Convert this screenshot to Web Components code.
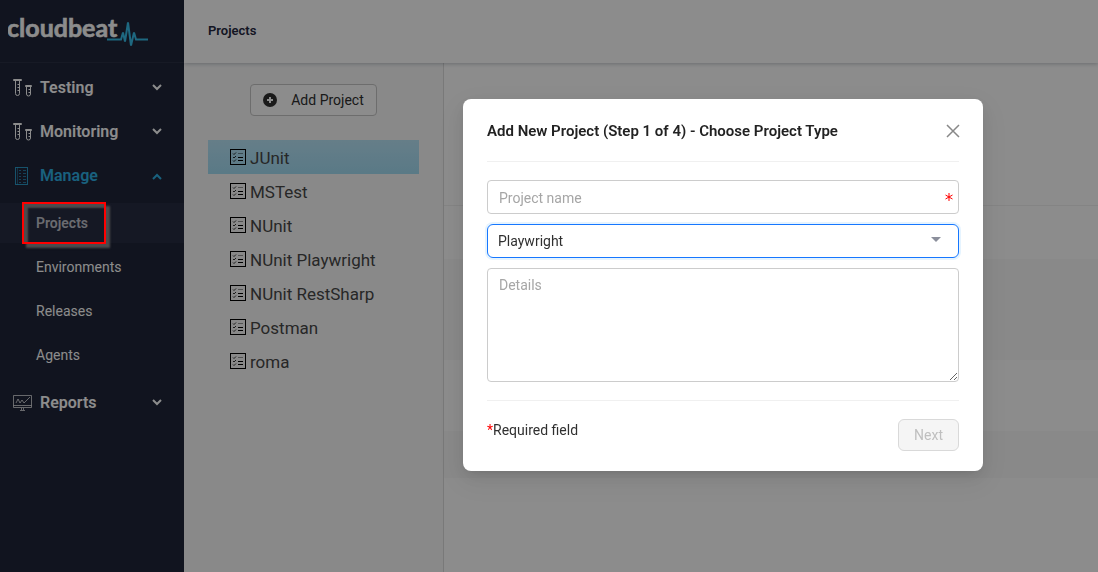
<!DOCTYPE html>
<html lang="en">
<head>
<meta charset="utf-8">
<title>Projects</title>
<style>
    body {
        margin: 0;
        font-family: Roboto, "Liberation Sans", sans-serif;
        font-size: 14px;
        color: #303030;
        background: #fff;
    }
</style>
</head>
<body>
<cb-app>
    <cb-sidebar slot="sidebar">
        <cb-nav-group icon="tubes" label="Testing"></cb-nav-group>
        <cb-nav-group icon="tubes" label="Monitoring"></cb-nav-group>
        <cb-nav-group icon="cabinet" label="Manage" open>
            <cb-nav-item label="Projects" active><cb-highlight></cb-highlight></cb-nav-item>
            <cb-nav-item label="Environments"></cb-nav-item>
            <cb-nav-item label="Releases"></cb-nav-item>
            <cb-nav-item label="Agents"></cb-nav-item>
        </cb-nav-group>
        <cb-nav-group icon="monitor" label="Reports"></cb-nav-group>
    </cb-sidebar>
    <span slot="title">Projects</span>
    <cb-project-list slot="list">
        <cb-project active>JUnit</cb-project>
        <cb-project>MSTest</cb-project>
        <cb-project>NUnit</cb-project>
        <cb-project>NUnit Playwright</cb-project>
        <cb-project>NUnit RestSharp</cb-project>
        <cb-project>Postman</cb-project>
        <cb-project>roma</cb-project>
    </cb-project-list>
    <cb-details slot="details"></cb-details>
</cb-app>
<cb-modal heading="Add New Project (Step 1 of 4) - Choose Project Type">
    <cb-project-form></cb-project-form>
</cb-modal>

<script>
const icons = {
    tubes: `<svg width="20" height="20" viewBox="0 0 20 20" fill="none" stroke="currentColor">
        <path d="M.5 2.500v-1h8v1zM2.500 3v12.500a2 2 0 0 0 4 0V3M4.500 6.500h2M4.500 9.500h2M4.500 12.500h2M12.500 8.500v-1h6v1zM13.500 9v7a2 2 0 0 0 4 0V9M15.500 11.500h2M15.500 14.500h2"/></svg>`,
    cabinet: `<svg width="20" height="20" viewBox="0 0 20 20" fill="none" stroke="currentColor" stroke-opacity=".8">
        <rect x="2.500" y="1.500" width="12" height="17"/><path d="M4.500 1v18" stroke-opacity=".4"/><path d="M6 4.500h2M6 7.500h2M6 10.500h2M6 13.500h2M6 16.500h2M10 4.500h3M10 7.500h3M10 10.500h3M10 13.500h3M10 16.500h3" stroke-opacity=".6"/></svg>`,
    monitor: `<svg width="20" height="20" viewBox="0 0 20 20" fill="none" stroke="currentColor" stroke-opacity=".7">
        <path d="M.5 2.500h18v12H.5zM.5 12.500h18M8.500 15v2M10.500 15v2M7 17.500h5M3 10l2-4 2 4 2-3 2 3 2-2 4-4"/></svg>`,
    checklist: `<svg width="16" height="16" viewBox="0 0 16 16" fill="none" stroke="#000">
        <rect x=".5" y=".5" width="15" height="15"/><path d="M3 4.500l1 1 2-2M3 8l1 1 2-2M3 11.500l1 1 2-2" stroke-width=".8"/><path d="M8 4.500h5" stroke-opacity=".4"/><path d="M8 8.500h5M8 11.500h5"/></svg>`
};

function define(name, html, setup) {
    const template = document.createElement('template');
    template.innerHTML = html;

    customElements.define(name, class extends HTMLElement {
        constructor() {
            super();
            const shadow = this.attachShadow({mode: 'open'});
            shadow.appendChild(template.content.cloneNode(true));
            if (setup) setup(this, shadow);
        }
    });
}

define('cb-app', `
    <style>
    :host {
        display: flex;
        min-height: 100vh;
    }
    .page {
        flex: 1;
        display: flex;
        flex-direction: column;
    }
    header {
        display: flex;
        align-items: center;
        position: relative;
        z-index: 1;
        height: 63px;
        padding: 0 24px 2px;
        box-sizing: border-box;
        background: #fff;
        box-shadow: 0 1px 4px rgba(0, 21, 41, 0.24);
    }
    h1 {
        margin: 0;
        font-size: 13px;
        font-weight: 600;
        line-height: 20px;
        color: #25293f;
    }
    main {
        flex: 1;
        display: flex;
    }
    </style>
    <slot name="sidebar"></slot>
    <div class="page">
        <header><h1><slot name="title"></slot></h1></header>
        <main><slot name="list"></slot><slot name="details"></slot></main>
    </div>
`);

define('cb-sidebar', `
    <style>
    :host {
        display: block;
        position: relative;
        width: 184px;
        background: #1f2639;
        color: #fff;
    }
    .logo {
        display: flex;
        height: 62px;
        border-bottom: 1px solid #2b3144;
        margin-bottom: 3px;
    }
    .logo svg {
        margin: 8px 0 0 8px;
    }
    </style>
    <div class="logo">
        <svg width="144" height="48" viewBox="0 0 144 48">
            <text x="-1" y="29" font-family="Lato, sans-serif" font-size="25" font-weight="700" fill="#fff" stroke="#fff" stroke-width=".6">cloudbeat</text>
            <path d="M99 31.500h14l2-7 2 9 3-19 3 23 3-13 2 7h12" fill="none" stroke="#38bdea" stroke-width="2"/>
        </svg>
    </div>
    <nav><slot></slot></nav>
`);

define('cb-nav-group', `
    <style>
    :host {
        display: block;
        color: #fff;
    }
    :host([open]) {
        color: #2eb1e6;
    }
    button {
        display: flex;
        align-items: center;
        width: 100%;
        height: 44px;
        padding: 0 22px 0 13px;
        border: 0;
        background: none;
        color: inherit;
        font: 600 16px/24px Roboto, "Liberation Sans", sans-serif;
        text-align: left;
    }
    .icon {
        display: flex;
        width: 27px;
    }
    .label {
        flex: 1;
    }
    .items {
        display: none;
    }
    :host([open]) .items {
        display: flex;
        flex-direction: column;
        gap: 4px;
        padding: 5px 0 6px;
    }
    :host([open]) .chevron {
        transform: rotate(180deg);
    }
    </style>
    <button type="button">
        <span class="icon"></span>
        <span class="label"></span>
        <svg class="chevron" width="10" height="8" viewBox="0 0 10 8" fill="none" stroke="currentColor" stroke-width="2"><path d="M1 1l4 4 4-4"/></svg>
    </button>
    <div class="items"><slot></slot></div>
`, (host, shadow) => {
    shadow.querySelector('.icon').innerHTML = icons[host.getAttribute('icon')];
    shadow.querySelector('.label').textContent = host.getAttribute('label');
    shadow.querySelector('button').addEventListener('click', () => host.toggleAttribute('open'));
});

define('cb-nav-item', `
    <style>
    :host {
        display: block;
        position: relative;
    }
    a {
        display: block;
        padding: 0 36px;
        font-size: 14px;
        line-height: 40px;
        color: #fff;
        text-decoration: none;
    }
    :host([active]) a {
        background: #272c42;
        color: #c2c4cc;
        font-weight: 600;
    }
    </style>
    <a href="#"></a>
    <slot></slot>
`, (host, shadow) => {
    shadow.querySelector('a').textContent = host.getAttribute('label');
});

/* red marker drawn over the menu entry, above the modal backdrop */
define('cb-highlight', `
    <style>
    :host {
        position: absolute;
        z-index: 20;
        left: 22px;
        top: -1px;
        width: 84px;
        height: 42px;
        box-sizing: border-box;
        border: 2px solid #f00;
        box-shadow: 4px 4px 2px #4b4b4d, inset 4px 4px 2px #4b4b4d;
        pointer-events: none;
    }
    </style>
`);

define('cb-project-list', `
    <style>
    :host {
        display: flex;
        flex-direction: column;
        width: 260px;
        padding: 21px 24px;
        box-sizing: border-box;
        border-right: 1px solid #dcdcdc;
        background: #fafafa;
    }
    button {
        display: flex;
        align-items: center;
        align-self: center;
        gap: 14px;
        height: 32px;
        margin-bottom: 24px;
        padding: 0 12px;
        border: 1px solid #c6c6c6;
        border-radius: 4px;
        background: #fff;
        color: #303030;
        font: 14px/20px Roboto, "Liberation Sans", sans-serif;
    }
    </style>
    <button type="button">
        <svg width="14" height="14" viewBox="0 0 14 14"><circle cx="7" cy="7" r="7" fill="#303030"/><path d="M7 4v6M4 7h6" stroke="#fff" stroke-width="2"/></svg>
        Add Project
    </button>
    <slot></slot>
`);

define('cb-project', `
    <style>
    :host {
        display: flex;
        align-items: center;
        gap: 4px;
        height: 34px;
        padding: 0 22px;
        font-size: 17px;
        line-height: 24px;
        color: #484848;
    }
    :host([active]) {
        background: linear-gradient(#b9e5f8, #a4def5);
    }
    span {
        padding-top: 2px;
    }
    </style>
    ${icons.checklist}<span><slot></slot></span>
`);

define('cb-details', `
    <style>
    :host {
        flex: 1;
        display: block;
        padding-top: 142px;
    }
    .row {
        height: 53px;
        border-top: 1px solid #f0f0f0;
    }
    .stripe {
        height: 101px;
        background: #f9f9f9;
    }
    .gap {
        height: 71px;
    }
    .stripe.short {
        height: 47px;
    }
    </style>
    <div class="row"></div>
    <div class="stripe"></div>
    <div class="gap"></div>
    <div class="stripe short"></div>
`);

define('cb-modal', `
    <style>
    :host {
        position: fixed;
        inset: 0;
        z-index: 10;
        display: flex;
        justify-content: center;
        align-items: flex-start;
        padding: 99px 0 24px 348px;
        background: rgba(0, 0, 0, 0.45);
    }
    section {
        width: 520px;
        margin-right: auto;
        margin-left: auto;
        padding: 0 24px 20px;
        box-sizing: border-box;
        border-radius: 8px;
        background: #fff;
        box-shadow: 0 6px 16px rgba(0, 0, 0, 0.08), 0 3px 6px -4px rgba(0, 0, 0, 0.12), 0 9px 28px 8px rgba(0, 0, 0, 0.05);
    }
    header {
        display: flex;
        justify-content: space-between;
        align-items: center;
        height: 60px;
        padding-top: 2px;
        border-bottom: 1px solid #f0f0f0;
    }
    h2 {
        margin: 0;
        font-size: 15px;
        font-weight: 600;
        line-height: 24px;
        color: #222;
    }
    button {
        display: flex;
        padding: 0;
        border: 0;
        background: none;
    }
    </style>
    <section role="dialog" aria-modal="true">
        <header>
            <h2></h2>
            <button type="button" aria-label="Close"><svg width="12" height="12" viewBox="0 0 12 12" overflow="visible" stroke="#888" stroke-width="1.500"><path d="M0 0l12 12M12 0L0 12"/></svg></button>
        </header>
        <slot></slot>
    </section>
`, (host, shadow) => {
    shadow.querySelector('h2').textContent = host.getAttribute('heading');
});

define('cb-project-form', `
    <style>
    :host {
        display: block;
    }
    form {
        display: flex;
        flex-direction: column;
        gap: 10px;
        padding-top: 18px;
    }
    label {
        display: flex;
        position: relative;
    }
    input, select, textarea {
        flex: 1;
        box-sizing: border-box;
        margin: 0;
        padding: 0 11px;
        border: 1px solid #ccc;
        border-radius: 4px;
        outline: 0;
        background: #fff;
        color: #303030;
        font: 14px/20px Roboto, "Liberation Sans", sans-serif;
    }
    input, select {
        height: 34px;
    }
    input {
        padding-top: 2px;
    }
    textarea {
        height: 114px;
        padding: 6px 11px;
    }
    ::placeholder {
        color: #a6a6a6;
    }
    select {
        appearance: none;
        border-color: #1677ff;
        border-radius: 6px;
        box-shadow: 0 0 0 2px rgba(5, 145, 255, 0.1);
        padding: 0 10px;
    }
    .star {
        position: absolute;
        right: 6px;
        top: 13px;
    }
    .arrow {
        position: absolute;
        right: 18px;
        top: 13px;
        pointer-events: none;
    }
    footer {
        display: flex;
        justify-content: space-between;
        align-items: flex-start;
        margin-top: 8px;
        padding-top: 18px;
        border-top: 1px solid #f0f0f0;
    }
    p {
        margin: 0;
        line-height: 22px;
    }
    .required {
        color: #f00;
    }
    button {
        height: 32px;
        padding: 0 15px;
        border: 1px solid #d9d9d9;
        border-radius: 6px;
        background: #f5f5f5;
        color: #bfbfbf;
        font: 14px/20px Roboto, "Liberation Sans", sans-serif;
    }
    </style>
    <form>
        <label>
            <input type="text" placeholder="Project name" aria-label="Project name" required>
            <svg class="star" width="8" height="8" viewBox="0 0 8 8" stroke="#f00"><path d="M4 0v8M.5 2l7 4M7.500 2l-7 4"/></svg>
        </label>
        <label>
            <select aria-label="Project type"><option>Playwright</option></select>
            <svg class="arrow" width="10" height="5" viewBox="0 0 10 5"><path d="M0 0h10L5 5z" fill="#8b8f9c"/></svg>
        </label>
        <label><textarea placeholder="Details" aria-label="Details"></textarea></label>
        <footer>
            <p><span class="required">*</span>Required field</p>
            <button type="button" disabled>Next</button>
        </footer>
    </form>
`);
</script>
</body>
</html>
